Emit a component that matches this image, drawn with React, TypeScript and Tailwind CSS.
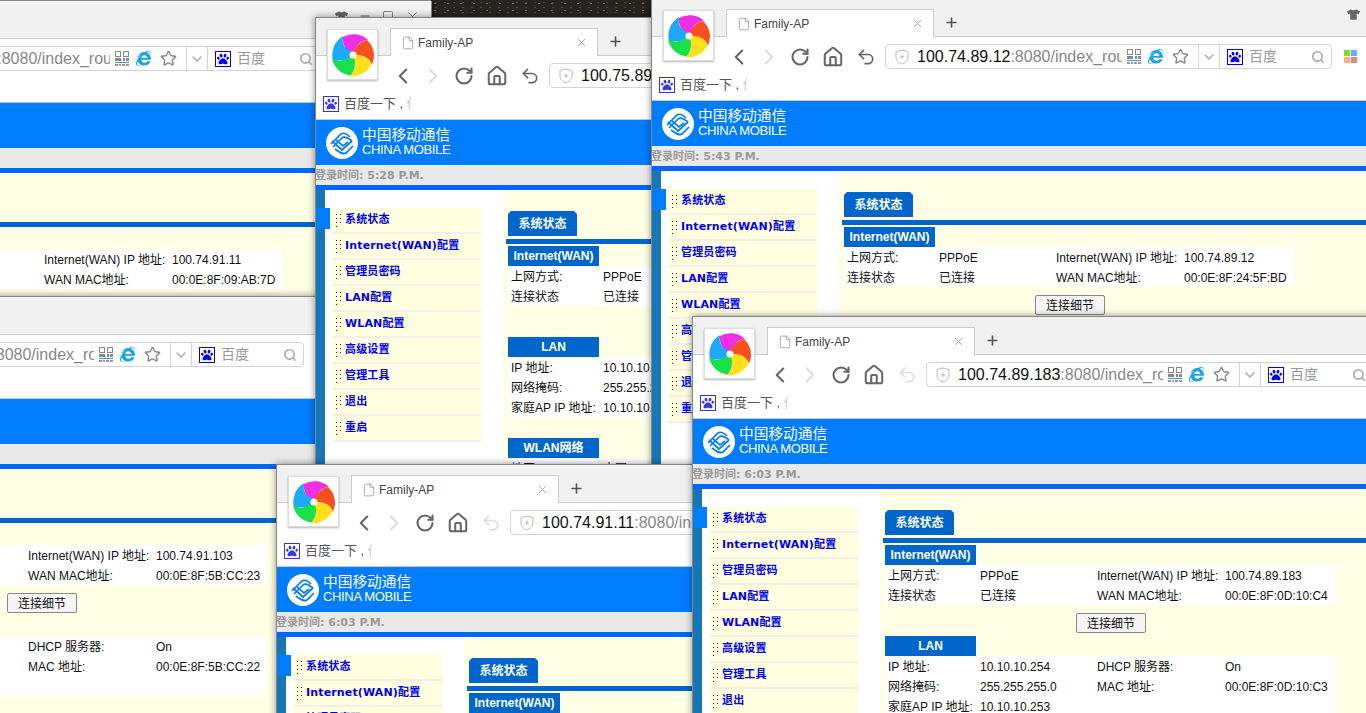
import React from 'react';
import { ChevronLeft, ChevronRight, ChevronDown, RotateCw, Home, Undo2, Star, Search, X, Plus, File, Minus, Square } from 'lucide-react';
import { FaPaw, FaInternetExplorer, FaTshirt } from 'react-icons/fa';

const menu = ['系统状态', 'Internet(WAN)配置', '管理员密码', 'LAN配置', 'WLAN配置', '高级设置', '管理工具', '退出', '重启'];

interface WindowData {
  pos: string;
  host: string;
  path: string;
  time: string;
  wanIp: string;
  wanMac: string;
  lanMac: string;
  undo?: boolean;
}

const windows: WindowData[] = [
  { pos: 'left-[-361px] top-0 rounded-tr', host: '100.74.91.11', path: ':8080/index_router.asp', time: '5:21 P.M.', wanIp: '100.74.91.11', wanMac: '00:0E:8F:09:AB:7D', lanMac: '00:0E:8F:09:AB:7C' },
  { pos: 'left-[-377px] top-[296px]', host: '100.74.91.103', path: ':8080/index_router.asp', time: '5:25 P.M.', wanIp: '100.74.91.103', wanMac: '00:0E:8F:5B:CC:23', lanMac: '00:0E:8F:5B:CC:22' },
  { pos: 'left-[315px] top-[17px]', host: '100.75.89.12', path: ':8080/index_router.asp', time: '5:28 P.M.', wanIp: '100.75.89.12', wanMac: '00:0E:8F:24:5F:BE', lanMac: '00:0E:8F:24:5F:BD', undo: true },
  { pos: 'left-[651px] top-[-2px]', host: '100.74.89.12', path: ':8080/index_router.asp', time: '5:43 P.M.', wanIp: '100.74.89.12', wanMac: '00:0E:8F:24:5F:BD', lanMac: '00:0E:8F:24:5F:BC', undo: true },
  { pos: 'left-[276px] top-[464px]', host: '100.74.91.11', path: ':8080/index_router.asp', time: '6:03 P.M.', wanIp: '100.74.91.11', wanMac: '00:0E:8F:09:AB:7D', lanMac: '00:0E:8F:09:AB:7C' },
  { pos: 'left-[692px] top-[316px]', host: '100.74.89.183', path: ':8080/index_router.asp', time: '6:03 P.M.', wanIp: '100.74.89.183', wanMac: '00:0E:8F:0D:10:C4', lanMac: '00:0E:8F:0D:10:C3' },
];

const petals = ['#f02ee8', '#f8501e', '#ffe01a', '#18e04a', '#1ea8f8'];

function SwirlLogo() {
  return (
    <div className="absolute left-[12px] top-[12px] z-10 flex h-[51px] w-[51px] items-center justify-center bg-white border border-[#ddd] shadow-[0_1px_2px_rgba(0,0,0,0.3)]">
      <svg width="44" height="44" viewBox="-22 -22 44 44">
        {petals.map((c, i) => (
          <path key={c} transform={`rotate(${i * 72})`} fill={c} d="M-10 -18A21 21 0 0 1 15 -15C8 -15 3 -10 3 -3L0 0C-7 -4 -11 -11 -10 -18Z" />
        ))}
        <circle r="3.5" fill="#fff" />
      </svg>
    </div>
  );
}

function MobileLogo() {
  return (
    <svg width="32" height="32" viewBox="0 0 32 32" className="shrink-0">
      <circle cx="16" cy="16" r="16" fill="#fff" />
      <g fill="none" stroke="#007cff" strokeWidth="1.7">
        <path d="M5 17L15 7C18 5 21 7 24 10" />
        <path d="M7 20L16 11C18 9 21 10 26 14" />
        <path d="M6 14L16 23L26 14" />
        <path d="M10 13L17 19L22 15" />
        <path d="M9 22C13 25 17 28 20 26L27 19" />
      </g>
    </svg>
  );
}

function QrIcon() {
  return (
    <svg width="14" height="15" viewBox="0 0 14 15" className="ml-[5px] shrink-0">
      <path fill="#888" d="M0 0H6V6H0ZM8 0H14V6H8ZM0 7H6V10H0ZM8 7H10V10H8ZM11 7H14V10H11ZM1 1V5H5V1ZM9 1V5H13V1Z" fillRule="evenodd" />
      <rect y="11" width="14" height="1" fill="#3a9ad9" />
      <path fill="#999" d="M0 13H3V15H0ZM4 13H6V15H4ZM7 13H10V15H7ZM11 13H14V15H11Z" />
    </svg>
  );
}

function PawBox({ pale }: { pale?: boolean }) {
  return (
    <div className={`flex h-4 w-4 shrink-0 items-center justify-center border ${pale ? 'border-[#3030e8] text-[#3838e8]' : 'border-[#0000f0] text-[#0000f0]'} bg-white`}>
      <FaPaw size={12} />
    </div>
  );
}

function Toolbar({ w }: { w: WindowData }) {
  return (
    <div className="h-[33px] pl-[73px] pt-[7px]">
      <div className="flex h-[25px] items-center">
        <ChevronLeft size={26} strokeWidth={1.9} className="w-[30px] shrink-0 text-[#666]" />
        <ChevronRight size={26} strokeWidth={1.9} className="w-[30px] shrink-0 text-[#ddd]" />
        <RotateCw size={20} strokeWidth={2.5} className="ml-[1px] w-[30px] shrink-0 text-[#666]" />
        <Home size={22} strokeWidth={2.2} className="ml-[3px] w-[30px] shrink-0 text-[#666]" />
        <Undo2 size={20} strokeWidth={2} className={`ml-[3px] w-[30px] shrink-0 ${w.undo ? 'text-[#666]' : 'text-[#ddd]'}`} />
        <div className="ml-[4px] flex h-[25px] w-[447px] shrink-0 items-center rounded-sm border border-[#d4d4d4] bg-white">
          <svg width="14" height="16" viewBox="0 0 14 16" className="ml-[9px] shrink-0" fill="none" stroke="#bbb">
            <path d="M1 2.5L7 1L13 2.5V8C13 11.5 10 14 7 15C4 14 1 11.5 1 8Z" />
            <path d="M7 5.5V10M4.8 7.8H9.2" />
          </svg>
          <div className="ml-[8px] w-[205px] shrink-0 overflow-hidden whitespace-nowrap text-[16px]">
            <span className="text-[#111]">{w.host}</span>
            <span className="text-[#888]">{w.path}</span>
          </div>
          <QrIcon />
          <FaInternetExplorer size={15} className="ml-[7px] shrink-0 text-[#19a5e6]" />
          <Star size={17} strokeWidth={2} className="ml-[9px] shrink-0 text-[#888]" />
          <div className="ml-[9px] flex h-full w-[22px] shrink-0 items-center justify-center border-x border-[#d4d4d4]">
            <ChevronDown size={16} strokeWidth={2.2} className="text-[#aaa]" />
          </div>
          <div className="flex flex-1 items-center pl-[7px] pr-[6px]">
            <PawBox />
            <span className="ml-[6px] flex-1 text-[14px] text-[#999]">百度</span>
            <Search size={14} strokeWidth={2.8} className="text-[#aaa]" />
          </div>
        </div>
        <div className="ml-[12px] grid shrink-0 grid-cols-2 gap-px">
          <span className="h-[6px] w-[6px] bg-[#84dc1e]" />
          <span className="h-[6px] w-[6px] bg-[#60b4fa]" />
          <span className="h-[6px] w-[6px] bg-[#ffae78]" />
          <span className="h-[6px] w-[6px] bg-[#f08088]" />
        </div>
      </div>
    </div>
  );
}

function Table({ rows }: { rows: string[][] }) {
  return (
    <div className="w-[450px] bg-white pl-[3px] text-[12px] text-[#111]">
      {rows.map((r) => (
        <div key={r[0]} className="grid h-5 grid-cols-[92px_117px_128px_110px] items-center whitespace-nowrap pt-[2px]">
          {r.map((c, i) => (
            <span key={i}>{c}</span>
          ))}
        </div>
      ))}
    </div>
  );
}

function SectionHead({ children }: { children: React.ReactNode }) {
  return <div className="flex h-5 w-[91px] items-center justify-center bg-[#0066cc] text-[12px] font-bold text-white">{children}</div>;
}

function BrowserWindow({ w }: { w: WindowData }) {
  return (
    <div className={`absolute isolate h-[800px] w-[793px] overflow-hidden bg-white shadow-[0_0_7px_rgba(0,0,0,0.45)] [font-family:'Liberation_Sans','Noto_Sans_CJK_SC',sans-serif] ${w.pos}`}>
      <SwirlLogo />
      {/* window frame line */}
      <div className="pointer-events-none absolute inset-0 z-20 border border-[#888]" />
      {/* tab strip */}
      <div className="relative h-[39px] border-b border-[#ccc] bg-[#f1f1f1]">
        <div className="absolute left-[75px] top-[11px] flex h-[28px] w-[208px] items-center border border-b-0 border-[#ccc] bg-white pl-[10px] pr-[9px] text-[12px] text-[#444]">
          <File size={14} strokeWidth={1.4} className="shrink-0 text-[#999]" />
          <span className="ml-[3px] flex-1">Family-AP</span>
          <X size={13} strokeWidth={1.8} className="text-[#aaa]" />
        </div>
        <Plus size={15} strokeWidth={2.6} className="absolute left-[293px] top-[17px] text-[#555]" />
        <FaTshirt size={13} className="absolute left-[696px] top-[10px] text-[#666]" />
        <Minus size={14} className="absolute left-[719px] top-[9px] text-[#666]" />
        <Square size={12} strokeWidth={1.6} className="absolute left-[743px] top-[10px] text-[#666]" />
        <X size={15} strokeWidth={1.4} className="absolute left-[766px] top-[9px] text-[#666]" />
      </div>
      <Toolbar w={w} />
      {/* bookmarks */}
      <div className="flex h-[30px] items-center pl-[8px]">
        <PawBox pale />
        <div className="ml-[5px] w-[67px] overflow-hidden whitespace-nowrap text-[13px] text-[#555]">
          百度一下 , <span className="text-[#ccc]">你好</span>
        </div>
      </div>
      <div className="h-px bg-[#c8c8c8]" />
      {/* page header */}
      <div className="flex h-[45px] items-center bg-[#007cff] pl-[11px] text-white">
        <MobileLogo />
        <div className="ml-[4px] flex flex-col pb-[2px]">
          <span className="text-[14.7px] leading-[16px]">中国移动通信</span>
          <span className="text-[13px] leading-[13px] tracking-[-0.35px] font-light">CHINA MOBILE</span>
        </div>
      </div>
      <div className="flex h-5 items-center bg-[#e9e9e9] pt-[2px] text-[11px] font-bold text-[#999] [font-family:'DejaVu_Sans','Noto_Sans_CJK_SC',sans-serif]">
        登录时间: {w.time}
      </div>
      <div className="h-[5px] bg-[#0066ff]" />
      {/* page body */}
      <div className="relative flex h-[600px]">
        <div className="absolute left-[1px] top-[18px] h-[21px] w-[14px] bg-[#007cff]" />
        <div className="w-[10px] bg-[#1677b8]" />
        <div className="w-[178px] pl-[8px] pt-[18px]">
          <div className="w-[148px]">
            {menu.map((m) => (
              <div key={m} className="flex h-[26px] items-center border-b-2 border-[#f0f0e8] bg-[#ffffe0] pl-[3px] text-[11px] font-bold tracking-[0.15px] text-[#0000f0] [font-family:'DejaVu_Sans','Noto_Sans_CJK_SC',sans-serif]">
                <svg width="6" height="14" viewBox="0 0 6 14" className="shrink-0" fill="#222">
                  <rect x="0" y="1" width="1" height="1" />
                  <rect x="4" y="1" width="1" height="1" />
                  <rect x="0" y="5" width="1" height="1" />
                  <rect x="4" y="5" width="1" height="1" />
                  <rect x="0" y="9" width="1" height="1" />
                  <rect x="4" y="9" width="1" height="1" />
                  <rect x="0" y="13" width="1" height="1" />
                </svg>
                <span className="ml-[3px] whitespace-nowrap">{m}</span>
              </div>
            ))}
          </div>
        </div>
        <div className="flex-1 bg-[#ffffe5] pl-[5px] pt-[21px]">
          <div className="flex h-[25px] w-[69px] items-center justify-center bg-[#0066cc] text-[12px] font-bold text-white [clip-path:polygon(3px_0,66px_0,69px_3px,69px_100%,0_100%,0_3px)]">
            系统状态
          </div>
          <div className="ml-[-2px] mt-[3px] h-[5px] bg-[#0066cc]" />
          <div className="mt-[2px]">
            <SectionHead>Internet(WAN)</SectionHead>
          </div>
          <Table
            rows={[
              ['上网方式:', 'PPPoE', 'Internet(WAN) IP 地址:', w.wanIp],
              ['连接状态', '已连接', 'WAN MAC地址:', w.wanMac],
            ]}
          />
          <button className="ml-[191px] mt-2 block h-5 w-[70px] rounded-[2px] border border-[#888] bg-[#f5f5f5] pt-[1px] text-[12px] text-[#111]">连接细节</button>
          <div className="mt-[3px]">
            <SectionHead>LAN</SectionHead>
          </div>
          <Table
            rows={[
              ['IP 地址:', '10.10.10.254', 'DHCP 服务器:', 'On'],
              ['网络掩码:', '255.255.255.0', 'MAC 地址:', w.lanMac],
              ['家庭AP IP 地址:', '10.10.10.253', '', ''],
            ]}
          />
          <div className="mt-[21px]">
            <SectionHead>WLAN网络</SectionHead>
          </div>
          <Table rows={[['地区:', '中国', '', '']]} />
        </div>
      </div>
    </div>
  );
}

export default function App() {
  return (
    <div className="relative h-[713px] w-[1366px] overflow-hidden bg-[#26241c] bg-[radial-gradient(#6d6a58_1px,transparent_1px),radial-gradient(#4a4a3a_1px,transparent_1px)] bg-[length:13px_7px,9px_5px]">
      {windows.map((w) => (
        <BrowserWindow key={w.pos} w={w} />
      ))}
    </div>
  );
}
